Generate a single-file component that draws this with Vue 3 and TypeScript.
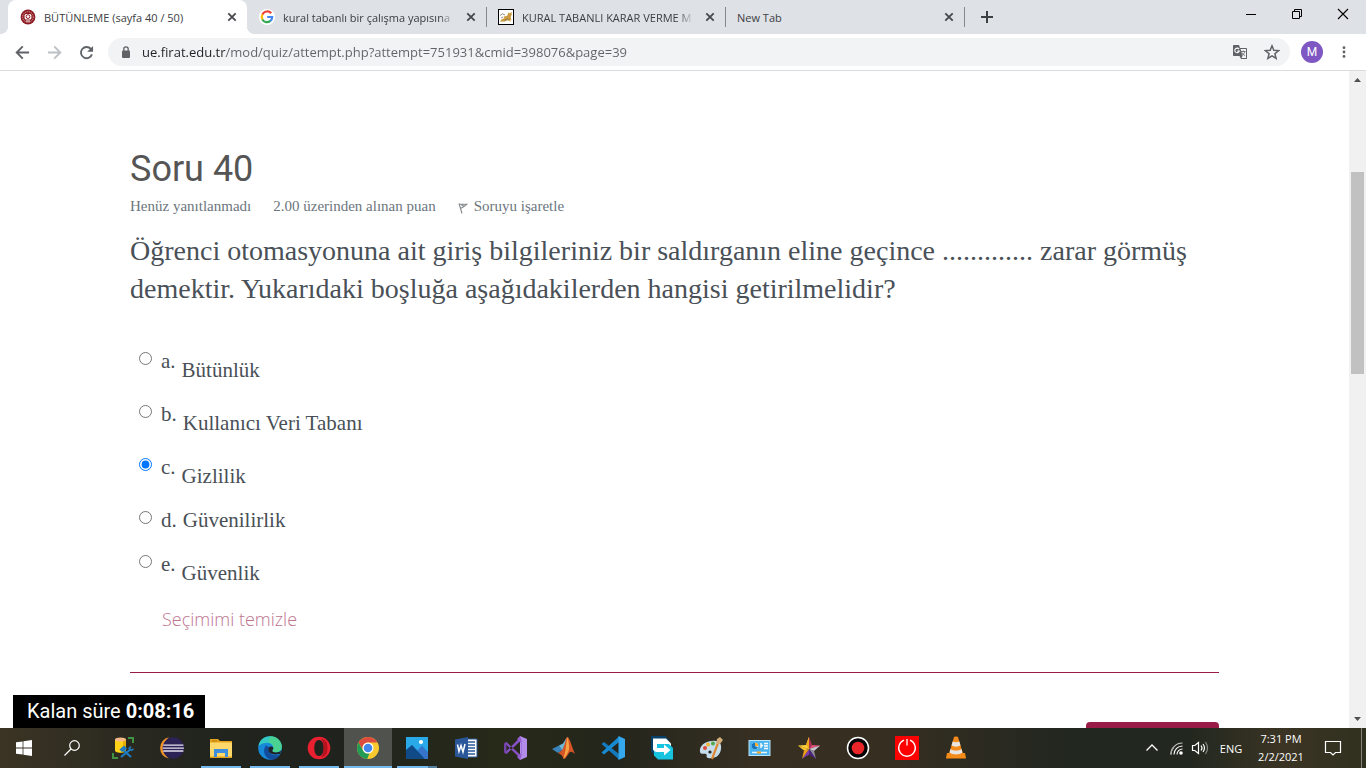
<script setup lang="ts">
import { ref } from 'vue'

interface Tab { title: string; icon: string; active?: boolean }
interface Option { letter: string; text: string; lowered: boolean }
interface TaskItem { id: string; label: string; state?: string }

const tabs: Tab[] = [
  { title: 'BÜTÜNLEME (sayfa 40 / 50)', icon: 'crest', active: true },
  { title: 'kural tabanlı bir çalışma yapısına', icon: 'google' },
  { title: 'KURAL TABANLI KARAR VERME M', icon: 'cat' },
  { title: 'New Tab', icon: '' },
]

const options: Option[] = [
  { letter: 'a.', text: 'Bütünlük', lowered: true },
  { letter: 'b.', text: 'Kullanıcı Veri Tabanı', lowered: true },
  { letter: 'c.', text: 'Gizlilik', lowered: true },
  { letter: 'd.', text: 'Güvenilirlik', lowered: false },
  { letter: 'e.', text: 'Güvenlik', lowered: true },
]

const tasks: TaskItem[] = [
  { id: 'sql', label: 'SQL tools' },
  { id: 'eclipse', label: 'Eclipse' },
  { id: 'explorer', label: 'File Explorer', state: 'open' },
  { id: 'edge', label: 'Edge', state: 'open' },
  { id: 'opera', label: 'Opera', state: 'open' },
  { id: 'chrome', label: 'Chrome', state: 'focused' },
  { id: 'photos', label: 'Photos', state: 'open stacked' },
  { id: 'word', label: 'Word' },
  { id: 'vs', label: 'Visual Studio' },
  { id: 'matlab', label: 'MATLAB' },
  { id: 'code', label: 'VS Code' },
  { id: 'share', label: 'Free Download Manager' },
  { id: 'paint', label: 'Paint' },
  { id: 'panel', label: 'Control Panel' },
  { id: 'star', label: 'Star' },
  { id: 'record', label: 'Recorder' },
  { id: 'power', label: 'Power' },
  { id: 'vlc', label: 'VLC' },
]

const address = ref('ue.firat.edu.tr/mod/quiz/attempt.php?attempt=751931&cmid=398076&page=39')
const selected = ref('c.')
</script>

<template>
  <div class="desktop">
    <header class="tabstrip">
      <div v-for="tab in tabs" :key="tab.title" class="tab" :class="{ active: tab.active }">
        <svg v-if="tab.icon === 'crest'" class="favicon" viewBox="0 0 16 16">
          <circle cx="8" cy="8" r="7.4" fill="#8d1a22" />
          <circle cx="8" cy="8" r="5.3" fill="none" stroke="#d9a9a9" stroke-width=".9" stroke-dasharray="1.4 .7" />
          <rect x="4.6" y="5" width="6.8" height="5.6" rx="1.6" fill="#fff" />
          <circle cx="8" cy="7.6" r="1.9" fill="none" stroke="#8d1a22" stroke-width="1" />
          <path d="M6 12h4" stroke="#fff" />
        </svg>
        <svg v-else-if="tab.icon === 'google'" class="favicon" viewBox="0 0 16 16">
          <circle cx="8" cy="8" r="8" fill="#fff" />
          <path d="M12.2 4.3A5.2 5.2 0 0 0 3.4 5.6" fill="none" stroke="#ea4335" stroke-width="2.2" />
          <path d="M3.5 5.4a5.2 5.2 0 0 0 0 5.2" fill="none" stroke="#fbbc05" stroke-width="2.2" />
          <path d="M3.4 10.4a5.2 5.2 0 0 0 8 1.5" fill="none" stroke="#34a853" stroke-width="2.2" />
          <path d="M8.2 8h5a5.2 5.2 0 0 1-1.9 4" fill="none" stroke="#4285f4" stroke-width="2.2" />
        </svg>
        <svg v-else-if="tab.icon === 'cat'" class="favicon" viewBox="0 0 16 16">
          <rect x=".5" y=".5" width="15" height="15" fill="#fff" stroke="#000" />
          <path d="M2 12.700 3.500 10.500 6.500 9l-1-1.500L9 7l1.500-3.500 1.300.8L13.800 3l-.2 3-1 2 1 3.500-1.600-.8.8 2-3-1.500-3 1.200z" fill="#cb9a3c" />
          <path d="M2 6.500l2.500-1.700L7 6M3 9l2-1M6.500 11.500l3-1.500 1.500.500" fill="none" stroke="#77736a" stroke-width=".8" />
        </svg>
        <span class="tab-title" :class="{ faded: tab.icon === 'cat' || tab.icon === 'google' }">{{ tab.title }}</span>
        <button class="tab-close" aria-label="Close tab">
          <svg viewBox="0 0 16 16"><path d="m4.3 4.3 7.4 7.4m0-7.4-7.4 7.4" stroke="#45484c" stroke-width="1.8" /></svg>
        </button>
      </div>
      <button class="new-tab" aria-label="New tab">
        <svg viewBox="0 0 16 16"><path d="M8 2v12M2 8h12" stroke="#3c4043" stroke-width="2" /></svg>
      </button>
      <div class="window-controls">
        <button aria-label="Minimize"><svg viewBox="0 0 12 12"><path d="M1 6.5h10" stroke="#000" /></svg></button>
        <button aria-label="Restore"><svg viewBox="0 0 12 12"><path d="M1.500 3.500h7v7h-7zM3.500 3.500v-2h7v7h-2" fill="none" stroke="#000" /></svg></button>
        <button aria-label="Close"><svg viewBox="0 0 12 12"><path d="m1 1 10 10M11 1 1 11" stroke="#000" stroke-width="1.100" /></svg></button>
      </div>
    </header>

    <nav class="toolbar">
      <button class="tool" aria-label="Back"><svg viewBox="0 0 16 16"><path d="M15 8H2M8.300 1.500 1.800 8l6.500 6.500" fill="none" stroke="#5f6368" stroke-width="2" /></svg></button>
      <button class="tool" aria-label="Forward"><svg viewBox="0 0 16 16"><path d="M1 8h13M7.700 1.500 14.200 8l-6.500 6.500" fill="none" stroke="#bdc1c6" stroke-width="2" /></svg></button>
      <button class="tool" aria-label="Reload"><svg viewBox="0 0 16 16"><path d="M12.700 4.200A6 6 0 1 0 13.800 10" fill="none" stroke="#5f6368" stroke-width="2" /><path d="M15 1v6.300H8.700z" fill="#5f6368" /></svg></button>
      <div class="omnibox">
        <svg class="lock" viewBox="0 0 10 12"><rect x="1" y="4.500" width="8" height="7.500" rx="1" fill="#5f6368" /><path d="M2.800 5V3a2.200 2.200 0 0 1 4.400 0v2" fill="none" stroke="#5f6368" stroke-width="1.300" /></svg>
        <input v-model="address" class="address" type="text" aria-label="Address" />
        <button class="omni-action" aria-label="Translate">
          <svg viewBox="0 0 16 16"><path d="M1.800 1H7l1 3h6.200c.5 0 .8.300.8.800v9.400c0 .5-.3.800-.8.800H9l-1.500-3H1.800A.8.800 0 0 1 1 11.200V1.800c0-.5.300-.8.800-.8z" fill="#5f6368" /><path d="M8.600 5H14v9H9.500l1-2z" fill="#f1f3f4" /><path d="M7 5.100a2.300 2.300 0 1 0 .300 2H5.300" fill="none" stroke="#fff" stroke-width="1.100" /><path d="M9 7.500h4.500M11.300 6.500v1M12.800 7.500c-.5 2-1.600 3-3 4M10 8.500c.6 1.500 1.600 2.500 3 3.200" fill="none" stroke="#5f6368" stroke-width=".8" /></svg>
        </button>
        <button class="omni-action" aria-label="Bookmark">
          <svg viewBox="0 0 16 16"><path d="m8 1.800 1.800 4.400 4.800.4-3.700 3.100 1.200 4.600L8 11.800l-4.100 2.500L5.100 9.700 1.400 6.600l4.800-.4z" fill="none" stroke="#5f6368" stroke-width="1.500" /></svg>
        </button>
      </div>
      <button class="avatar" aria-label="Profile">M</button>
      <button class="menu" aria-label="Menu"><svg viewBox="0 0 16 16"><g fill="#5f6368"><circle cx="8" cy="3" r="1.600" /><circle cx="8" cy="8" r="1.600" /><circle cx="8" cy="13" r="1.600" /></g></svg></button>
    </nav>

    <div class="viewport">
      <main class="page">
        <h1>Soru 40</h1>
        <div class="info">
          <span>Henüz yanıtlanmadı</span>
          <span>2.00 üzerinden alınan puan</span>
          <a href="#" class="flag">
            <svg viewBox="0 0 10 12"><path d="m1 1.500 3 10M1.300 2l7.500.300L6 4.500l-3.500 2M3 2.500l3 1.800" fill="none" stroke="#868a8e" stroke-width="1.100" /></svg>
            Soruyu işaretle
          </a>
        </div>
        <p class="question">Öğrenci otomasyonuna ait giriş bilgileriniz bir saldırganın eline geçince ............. zarar görmüş demektir. Yukarıdaki boşluğa aşağıdakilerden hangisi getirilmelidir?</p>
        <form class="answers">
          <label v-for="option in options" :key="option.letter" class="answer" :class="{ lowered: option.lowered }">
            <input v-model="selected" type="radio" name="answer" :value="option.letter" />
            <span class="letter">{{ option.letter }}</span>
            <span class="answer-text">{{ option.text }}</span>
          </label>
          <a href="#" class="clear" @click.prevent="selected = ''">Seçimimi temizle</a>
        </form>
        <hr />
        <button class="next" aria-label="Sonraki sayfa"></button>
      </main>
      <div class="timer">Kalan süre <b>0:08:16</b></div>
      <div class="scrollbar">
        <button aria-label="Scroll up"><svg viewBox="0 0 17 17"><path d="M5 11h7L8.500 7z" fill="#505050" /></svg></button>
        <div class="track"><div class="thumb"></div></div>
        <button aria-label="Scroll down"><svg viewBox="0 0 17 17"><path d="M5 6h7l-3.500 4z" fill="#505050" /></svg></button>
      </div>
    </div>

    <footer class="taskbar">
      <button class="system" aria-label="Start"><svg class="small" viewBox="0 0 16 16"><path d="M0 2.300 6.600 1.400v6.200H0zM7.400 1.300 16 0v7.600H7.400zM0 8.400h6.600v6.200L0 13.700zM7.400 8.400H16V16l-8.600-1.300z" fill="#fff" /></svg></button>
      <button class="system" aria-label="Search"><svg class="small" viewBox="0 0 16 16"><circle cx="10.500" cy="5.500" r="4.800" fill="none" stroke="#fff" stroke-width="1.200" /><path d="m7 9-6.500 6.500" stroke="#fff" stroke-width="1.300" /></svg></button>
      <button v-for="task in tasks" :key="task.id" class="task" :class="task.state" :aria-label="task.label">
        <svg v-if="task.id === 'sql'" viewBox="0 0 24 24">
          <path d="M17 2h5v5M2 17v5h5" fill="none" stroke="#3f9444" stroke-width="2" />
          <path d="M4 3.500v11c0 3 11 3 11 0v-11z" fill="#ffd217" /><path d="M12 4v12c2-.3 3-1 3-1.500v-11z" fill="#e6ae00" /><ellipse cx="9.500" cy="3.500" rx="5.500" ry="2" fill="#f5b989" />
          <path d="m11 13 9 8M20 13l-10 8" stroke="#1e7dc1" stroke-width="2.200" /><path d="m9.500 13.500 3.500-3 2 2-4 2.500zM17.500 13l2.500-2.500M20 14.500l2.500-1.500" stroke="#1e7dc1" stroke-width="1.500" fill="#1e7dc1" />
        </svg>
        <svg v-else-if="task.id === 'eclipse'" viewBox="0 0 24 24">
          <path d="M9 1.200a11 11 0 0 0 0 21.600A14 14 0 0 1 9 1.200z" fill="#f0942b" />
          <circle cx="13.300" cy="12" r="10.700" fill="#2c2255" />
          <path d="M3.200 9.200h20.200M2.700 12.100h21.200M3.200 15h20.200" stroke="#e6e2f2" stroke-width="1.300" />
        </svg>
        <svg v-else-if="task.id === 'explorer'" viewBox="0 0 24 24">
          <path d="M1 3h8l2 2h12v17H1z" fill="#e3a21a" /><path d="M1 6.500h22v14H1z" fill="#ffd86b" /><path d="M3 5h5" stroke="#ba7c0a" />
          <path d="M5 13h14v8h-3v-4H8v4H5z" fill="#3d8fdd" />
        </svg>
        <svg v-else-if="task.id === 'edge'" viewBox="0 0 24 24">
          <circle cx="12" cy="12" r="11.800" fill="#168ad9" />
          <path d="M.5 10C1.500 4 6 .2 12 .2c7 0 11.800 5 11.800 10.300 0 4-3 6-6 6-2 0-3.500-.8-3.500-1.700 0-.6 1-1 1-3C15.300 9 12.500 7 9 7 5 7 1.500 8.500.5 10z" fill="#35c9c1" />
          <path d="M12 .2c7 0 11.800 5 11.800 10.300 0 4-3 6-6 6-2 0-3.500-.8-3.500-1.700 0-.6 1-1 1-3 0-3-2-4.800-4.500-5.500z" fill="#52d483" opacity=".75" />
          <path d="M8 9.500C4 14 6.500 22 13 23.800c4 0 7.500-2 9.200-5.400-3 1.400-7.500 1.500-10.200-1.200-2-2-2-4.800-1-6.200z" fill="#124c9b" />
          <path d="M11 11c-2 3 .3 7.500 6 7.500 2.500 0 5.200-1 5.200-.4l1-3.500c-1.500 1.400-3.400 1.900-5.400 1.900-2 0-3.500-.8-3.500-1.700 0-.6 1-1 1-3 0-1-2-2-4.300-.8z" fill="#20242a" />
        </svg>
        <svg v-else-if="task.id === 'opera'" viewBox="0 0 24 24">
          <path fill-rule="evenodd" d="M12 .7a11.300 11.300 0 1 0 0 22.600A11.300 11.300 0 0 0 12 .7zM12 4c3 0 4.700 3.500 4.700 8S15 20 12 20s-4.700-3.500-4.700-8S9 4 12 4z" fill="#e8202f" />
          <path d="M14 3c5 0 6.500 4 6.500 9s-2 9-6.500 9c2-1 2.700-5 2.700-9S16 4 14 3z" fill="#b3121e" />
        </svg>
        <svg v-else-if="task.id === 'chrome'" viewBox="0 0 24 24">
          <circle cx="12" cy="12" r="11" fill="#fbc92e" />
          <path d="M2.500 6.500A11 11 0 0 1 21.500 6.500H12a5.500 5.500 0 0 0-4.800 8.200z" fill="#dd4b3e" />
          <path d="M2.500 6.500 7.200 14.700A5.500 5.500 0 0 0 13.500 17.300L11.200 23A11 11 0 0 1 2.500 6.500z" fill="#219b55" />
          <circle cx="12" cy="12" r="5.500" fill="#fff" /><circle cx="12" cy="12" r="4.300" fill="#4286ee" />
        </svg>
        <svg v-else-if="task.id === 'photos'" viewBox="0 0 24 24">
          <path d="M1 1h22v22H1z" fill="#2aa9e8" /><circle cx="16" cy="6" r="2.100" fill="#fff" />
          <path d="m12 15 5-5 6 6v7H10z" fill="#2783d4" /><path d="m1 14 6-5 13 14H1z" fill="#104a87" /><path d="m13 14 4-4 6 7v6h-3z" fill="#3773cb" />
        </svg>
        <svg v-else-if="task.id === 'word'" viewBox="0 0 24 24">
          <path d="M11 3h12v18H11z" fill="#fff" stroke="#2b579a" /><path d="M14 6h7M14 9h7M14 12h7M14 15h7M14 18h7" stroke="#2b579a" stroke-width="1.300" />
          <path d="M1 3.500 14 1v22L1 20.500z" fill="#2b579a" /><path d="m3.500 8.500 1.500 7 2-6 2 6.500 2-8" fill="none" stroke="#fff" stroke-width="1.500" />
        </svg>
        <svg v-else-if="task.id === 'vs'" viewBox="0 0 24 24">
          <path d="m1.500 7 2-1 14 13v3.500zM1.500 17l2 1 14-13V1z" fill="#8750c7" /><path d="M1 7.500 3.500 6.300v11.400L1 16.500z" fill="#7241aa" />
          <path d="m17 0 7 3v18l-7 3z" fill="#b38be8" /><path d="m17 0 1.500 4v16L17 24l-3-3 4-4V7l-4-4z" fill="#9460d0" />
        </svg>
        <svg v-else-if="task.id === 'matlab'" viewBox="0 0 24 24">
          <path d="m0 13 7-3.500 3.500 4.500-4.500 3z" fill="#3a83bb" /><path d="m7 9.500 4-2L15 1l-3 14-2-1z" fill="#6eb7d7" />
          <path d="M6 17c2.500-1 4.500-3 6-7 1.500-4 2-9 3.500-9 2 0 4 9 7.500 17-3-2.500-4-3-6-1-3 5-4 6-5 6-1.500-3-3-5-6-6z" fill="#d65527" /><path d="M15.500 1c-2 7-1 14-4.500 22 3-2 4-5 5.500-8C18 11 16.500 5 15.500 1z" fill="#f9a443" />
        </svg>
        <svg v-else-if="task.id === 'code'" viewBox="0 0 24 24">
          <path d="M.5 8 3 6l15 12v5.500z" fill="#1479bd" /><path d="M.5 16.500 3 18.500 18 6V.500z" fill="#168bd4" /><path d="m17.500 0 6.500 3v18l-6.500 3z" fill="#35a7ec" />
        </svg>
        <svg v-else-if="task.id === 'share'" viewBox="0 0 24 24">
          <path d="M1 0h14l4 4v4H5v12L1 15z" fill="#063f67" />
          <path d="M3 2.500h13l5 5V18H8l-5-4.500z" fill="#fff" />
          <path d="M6 8h13l4 4v11.500H8L4 19.500V10z" fill="#16c4e0" />
          <path d="M3 3.500h10v4H7V12h7V8.500l6.500 5.500-6.500 5.500V16H7q-3 0-4-3z" fill="#fff" />
        </svg>
        <svg v-else-if="task.id === 'paint'" viewBox="0 0 24 24">
          <path d="M1 16C0 10 6 5 13 5c7-1 10 3 9 8-1 7-6 10-13 9-3-1 0-3-2-4s-5 1-6-2z" fill="#c5dceb" />
          <circle cx="6" cy="12" r="2" fill="#dd4b37" /><circle cx="9" cy="8.500" r="2" fill="#efb73b" /><circle cx="14" cy="7.500" r="2" fill="#53a849" /><circle cx="11" cy="16" r="1.600" fill="#222" />
          <path d="m13 23 6-16" stroke="#df872f" stroke-width="2.200" /><path d="m17 8 1-5 3-2 3 3-3 4z" fill="#d4ad7b" />
        </svg>
        <svg v-else-if="task.id === 'panel'" viewBox="0 0 24 24">
          <rect x="1" y="4.500" width="21" height="15" fill="#4ab2ed" stroke="#b9e5fa" /><circle cx="7" cy="10" r="3.300" fill="#fff" /><path d="M7 6.700A3.300 3.300 0 0 1 10.300 10H7z" fill="#ffac29" /><path d="M7 10V6.700A3.300 3.300 0 1 0 10 11z" fill="#1976bc" />
          <path d="M13 7v5M13 9.500h2M16 7.500h4M16 10h4M16 12.500h4" stroke="#fff" stroke-width="1.400" /><path d="M4 16.500h15" stroke="#e6f6ff" stroke-width="1.500" /><path d="M9 16.500h4" stroke="#f0a42a" stroke-width="2" />
        </svg>
        <svg v-else-if="task.id === 'star'" viewBox="0 0 24 24">
          <path d="M12 .8 9 9 .8 9.500 12 13z" fill="#ffd23c" /><path d="M12 .8V13L9 9z" fill="#f2a81d" />
          <path d="m12 .8 3.200 8.200L12 13z" fill="#a8324f" /><path d="M15.200 9 23.200 9.500 12 13z" fill="#e2527a" />
          <path d="M23.200 9.500 12 13l5 2z" fill="#c9c7cf" /><path d="m17 15-5-2 7 10z" fill="#8f8d98" />
          <path d="m12 13 7 10-7-4.500z" fill="#4d2180" /><path d="M12 13v5.500L5 23z" fill="#7e3cab" />
          <path d="M5 23 7 14.500 12 13z" fill="#f0a11b" /><path d="M.8 9.500 7 14.500l5-1.500z" fill="#ffc52f" />
        </svg>
        <svg v-else-if="task.id === 'record'" viewBox="0 0 24 24"><circle cx="12" cy="12" r="10.500" fill="#050505" stroke="#fff" stroke-width="1.500" /><circle cx="12" cy="12" r="6.300" fill="#e82528" /></svg>
        <svg v-else-if="task.id === 'power'" viewBox="0 0 24 24"><path d="M0 0h24v24H0z" fill="#f00" /><path d="M9 4.200a8.300 8.300 0 1 0 6 0M12 3v6.500" fill="none" stroke="#fff" stroke-width="1.300" /></svg>
        <svg v-else viewBox="0 0 24 24">
          <path d="m3 17-1 5.500h20L21 17z" fill="#f58c17" /><path d="m10 1-5 17c2 2.500 12 2.500 14 0L14 1c-.5-.7-3.500-.7-4 0z" fill="#f28a1c" />
          <path d="M8.700 5.500c2 1 4.600 1 6.600 0l1.200 4c-2.500 1.500-6.500 1.500-9 0zM6.500 13c3 2 8 2 11 0l1 3.500c-3 2.500-10 2.500-13 0z" fill="#e9e6e1" />
        </svg>
      </button>
      <div class="tray">
        <button class="chevron" aria-label="Show hidden icons"><svg viewBox="0 0 16 16"><path d="m2.500 10.500 5.500-5.500 5.500 5.500" fill="none" stroke="#fff" stroke-width="1.300" /></svg></button>
        <button class="network" aria-label="Network"><svg viewBox="0 0 16 16"><g fill="none" stroke="#fff" stroke-width="1.100"><path d="M2 14.500C2 8 7 3 13.500 3" opacity=".75" /><path d="M5 14.500C5 9.500 9 6 13.500 6M8 14.500C8 11.500 10.500 9 13.500 9" /></g><path d="M2 14.500C2 12 3 9 4.500 7.500" fill="none" stroke="#aaa" stroke-width="1.500" /><circle cx="12" cy="13" r="1.800" fill="#fff" /></svg></button>
        <button class="sound" aria-label="Volume"><svg viewBox="0 0 18 16"><g fill="none" stroke="#fff" stroke-width="1.200"><path d="M1.500 5.500h2.300l3.700-3v11l-3.700-3H1.500zM10 5.500q2 2.500 0 5M12 4q3 4 0 8" /><path d="M14.500 2q4 6 0 12" opacity=".45" /></g></svg></button>
        <button class="language">ENG</button>
        <button class="clock"><span>7:31 PM</span><span>2/2/2021</span></button>
        <button class="notices" aria-label="Notifications"><svg viewBox="0 0 18 18"><path d="M1.500 2.500h15v11h-5L9 16l-2.500-2.500h-5z" fill="none" stroke="#fff" stroke-width="1.200" /></svg></button>
        <button class="show-desktop" aria-label="Show desktop"></button>
      </div>
    </footer>
  </div>
</template>

<style>
body { overflow: hidden; }
</style>

<style scoped>
* { box-sizing: border-box; }
button { border: 0; padding: 0; background: none; font: inherit; color: inherit; display: grid; place-items: center; }
svg { display: block; }
a { text-decoration: none; }
.desktop { display: flex; flex-direction: column; height: 100vh; background: #fff; font-family: "Open Sans", "Noto Sans", sans-serif; font-size: 11px; }

.tabstrip { display: flex; height: 34px; flex: none; padding-left: 8px; background: #dee1e6; color: #3c4043; }
.tab { position: relative; display: flex; align-items: center; flex: 0 1 239px; min-width: 0; gap: 8px; padding: 0 7px 0 12px; }
.tab:not(.active)::after { content: ""; position: absolute; left: 100%; top: 7px; width: 1px; height: 20px; background: #85888d; }
.tab.active { background: #fff; border-radius: 8px 8px 0 0; }
.tab.active::before, .tab.active::after { content: ""; position: absolute; bottom: 0; width: 8px; height: 8px; }
.tab.active::before { right: 100%; background: radial-gradient(circle at 0 0, transparent 8px, #fff 8px); }
.tab.active::after { left: 100%; background: radial-gradient(circle at 100% 0, transparent 8px, #fff 8px); }
.favicon { width: 16px; height: 16px; flex: none; }
.tab-title { flex: 1; overflow: hidden; white-space: nowrap; }
.tab-title.faded { mask-image: linear-gradient(to left, transparent, #000 16px); }
.tab-close, .tab-close svg { width: 16px; height: 16px; flex: none; }
.new-tab { width: 46px; height: 34px; }
.new-tab svg { width: 16px; height: 16px; }
.window-controls { display: flex; margin-left: auto; }
.window-controls button { width: 46px; height: 28px; }
.window-controls svg { width: 12px; height: 12px; }

.toolbar { display: flex; align-items: center; flex: none; height: 37px; padding: 0 6px; border-bottom: 1px solid #dadce0; }
.tool { width: 32px; height: 32px; }
.tool svg { width: 15px; height: 15px; }
.omnibox { display: flex; align-items: center; flex: 1; height: 28px; margin-left: 6px; padding: 0 2px 0 13px; border-radius: 14px; background: #f1f3f4; }
.lock { width: 10px; height: 12px; margin-right: 11px; }
.address { flex: 1; min-width: 0; height: 24px; padding: 0; border: 0; outline: 0; font: 13px "Open Sans", "Noto Sans", sans-serif; background: linear-gradient(to right, #202124 84px, #5f6368 84px); -webkit-background-clip: text; background-clip: text; color: transparent; caret-color: #202124; }
.omni-action { width: 32px; height: 28px; }
.omni-action svg { width: 16px; height: 16px; }
.avatar { width: 22px; height: 22px; margin-left: 11px; border-radius: 50%; background: #7e57c2; color: #fff; font: 12px Roboto, sans-serif; }
.menu { width: 32px; height: 32px; margin-left: 5px; }
.menu svg { width: 14px; height: 14px; }

.viewport { position: relative; display: flex; flex: 1; min-height: 0; color: #495057; }
.page { flex: 1; min-width: 0; overflow: hidden; padding: 76px 130px 0; font-family: "Liberation Serif", serif; }
h1 { margin: 0; font: 36px/44px Roboto, sans-serif; color: #555; }
.info { display: flex; gap: 22px; margin-top: 5px; font-size: 15px; line-height: 20px; color: #6c757d; }
.flag { display: flex; align-items: center; gap: 6px; color: inherit; }
.flag svg { width: 10px; height: 12px; margin-top: 4px; }
.question { margin: 16px 0 0; font-size: 28px; line-height: 38px; }
.answers { display: flex; flex-direction: column; align-items: flex-start; margin-top: 41px; font-size: 21px; line-height: 24px; }
.answer { display: flex; align-items: flex-start; height: 44px; padding-left: 9px; }
.answer.lowered { height: 53px; }
.answer.lowered .answer-text { padding-top: 9px; }
.answer input { width: 13px; height: 13px; margin: 3px 9px 0 0; }
.letter { margin-right: 6px; }
.clear { margin: 1px 0 0 32px; font: 300 18px/26px "Open Sans", sans-serif; color: #bd7590; }
hr { height: 1px; margin: 40px 0 49px; border: 0; background: #981b48; }
.next { width: 133px; height: 40px; margin-left: auto; border-radius: 4px; background: #981b48; }
.timer { position: absolute; left: 13px; bottom: 0; padding: 0 11px 0 14px; background: #000; color: #fff; font: 20px/33px Roboto, sans-serif; }
.scrollbar { display: flex; flex-direction: column; width: 17px; background: #f1f1f1; }
.scrollbar button, .scrollbar svg { width: 17px; height: 17px; }
.track { flex: 1; display: grid; grid-template-rows: 84fr 202fr 337fr; padding: 0 2px; }
.thumb { grid-row: 2; background: #c1c1c1; }

.taskbar { display: flex; flex: none; height: 40px; background: linear-gradient(to right, #3b3424, #22241e 14%, #20231d 25%, #272a18 37%, #24251c 45%, #362f22 55%, #352e21 66%, #222720 78%, #22281f 87%, #3b3424 94%, #30301f); color: #fff; }
.system { width: 48px; }
.small { width: 16px; height: 16px; }
.task { position: relative; width: 48px; margin-right: 1px; }
.system + .task { margin-left: 3px; }
.task svg { width: 24px; height: 24px; }
.task.open::after, .task.focused::after { content: ""; position: absolute; bottom: 0; left: 4px; right: 4px; height: 2px; background: #76b9ed; }
.task.focused { background: #50534d; }
.task.focused::after { left: 0; right: 0; }
.task.stacked::after { background: linear-gradient(to right, #76b9ed 31px, #55809f 31px); }
.tray { display: flex; margin-left: auto; }
.tray svg { width: 16px; height: 16px; }
.chevron { width: 24px; }
.network { width: 26px; }
.sound { width: 20px; }
.sound svg { width: 18px; }
.language { width: 42px; }
.clock { width: 58px; align-content: center; line-height: 18px; }
.notices { width: 46px; }
.notices svg { width: 18px; height: 18px; }
.show-desktop { width: 5px; margin-left: 5px; border-left: 1px solid #85837a; }
</style>
